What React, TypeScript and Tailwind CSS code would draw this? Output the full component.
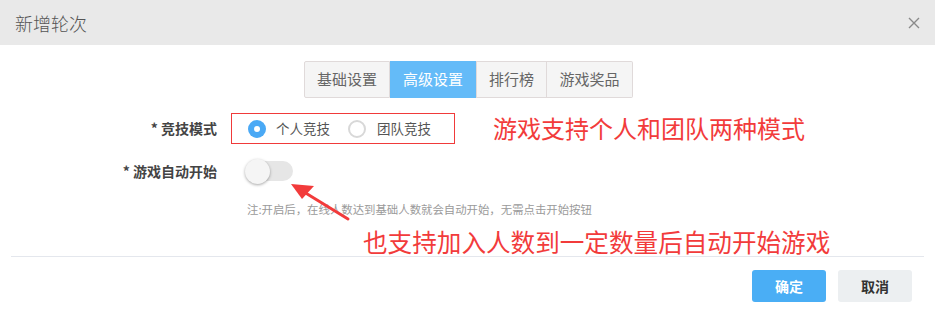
import React from "react";

export default function App() {
  return (
    <div
      className="relative w-[935px] h-[314px] bg-white overflow-hidden"
      style={{ fontFamily: '"Noto Sans CJK SC", "Noto Sans", sans-serif' }}
    >
      {/* Header */}
      <div className="h-[45px] bg-[#e9e9e9] flex items-center justify-between pl-[15px] pr-[14px]">
        <span className="text-[18px] text-[#555] font-light leading-none">新增轮次</span>
        <svg width="12" height="12" viewBox="0 0 12 12" className="mr-[1px]">
          <path d="M1 1L11 11M11 1L1 11" stroke="#8a8a8a" strokeWidth="1.4" />
        </svg>
      </div>

      {/* Tabs */}
      <div className="flex justify-center mt-[16px] pl-[2px]">
        <div className="flex h-[37px] text-[15px]">
          <div className="w-[86px] flex items-center justify-center bg-[#f5f5f5] border border-[#e0dada] text-[#666] rounded-l-[2px]">基础设置</div>
          <div className="w-[86px] flex items-center justify-center bg-[#64bbf8] text-white">高级设置</div>
          <div className="w-[71px] flex items-center justify-center bg-[#f5f5f5] border border-[#e0dada] text-[#666]">排行榜</div>
          <div className="w-[86px] flex items-center justify-center bg-[#f5f5f5] border border-l-0 border-[#e0dada] text-[#666] rounded-r-[2px]">游戏奖品</div>
        </div>
      </div>

      {/* Row 1 */}
      <div className="flex items-center mt-[15px] h-[31px]">
        <div className="w-[217px] text-right text-[14px] font-bold text-[#444]">* 竞技模式</div>
        <div className="ml-[14px] w-[224px] h-[31px] border border-[#f03a3a] flex items-center pl-[16px] text-[13.5px] text-[#555]">
          <span className="w-[18px] h-[18px] rounded-full bg-[#4aa9f5] flex items-center justify-center">
            <span className="w-[6px] h-[6px] rounded-full bg-white" />
          </span>
          <span className="ml-[10px]">个人竞技</span>
          <span className="ml-[18px] w-[18px] h-[18px] rounded-full border-2 border-[#d8d8d8] bg-white" />
          <span className="ml-[11px]">团队竞技</span>
        </div>
      </div>

      {/* Row 2 */}
      <div className="flex items-center mt-[14px] h-[26px]">
        <div className="w-[217px] text-right text-[14px] font-bold text-[#444]">* 游戏自动开始</div>
        <div className="ml-[28px] relative w-[48px] h-[26px] flex items-center">
          <div className="absolute left-[6px] right-0 h-[20px] rounded-full bg-[#e6e6e6]" />
          <div className="absolute left-0 w-[25px] h-[25px] rounded-full bg-[#f5f5f5] shadow-[0_1px_3px_rgba(0,0,0,0.35)]" />
        </div>
      </div>

      {/* Note */}
      <div className="ml-[247px] mt-[20px] text-[11.4px] text-[#9a9a9a] leading-none whitespace-nowrap">
        注:开启后，在线人数达到基础人数就会自动开始，无需点击开始按钮
      </div>

      {/* Divider */}
      <div className="mx-[11px] mt-[41px] h-[1px] bg-[#e4e7ed]" />

      {/* Buttons */}
      <div className="flex justify-end gap-[12px] pr-[23px] mt-[13px]">
        <button className="w-[74px] h-[32px] rounded-[3px] bg-[#4aaef5] text-white text-[14px] font-bold">确定</button>
        <button className="w-[74px] h-[32px] rounded-[3px] bg-[#eceff1] text-[#333] text-[14px] font-bold">取消</button>
      </div>

      {/* Annotations */}
      <div className="absolute left-[493px] top-[116px] text-[24px] text-[#f23b3b] leading-none whitespace-nowrap">
        游戏支持个人和团队两种模式
      </div>
      <div className="absolute left-[363px] top-[229px] text-[24.6px] text-[#f23b3b] leading-none whitespace-nowrap">
        也支持加入人数到一定数量后自动开始游戏
      </div>
      <svg className="absolute left-0 top-0" width="935" height="314" viewBox="0 0 935 314">
        <path d="M348 219 L304 192" stroke="#f23b3b" strokeWidth="3" strokeLinecap="round" />
        <path d="M291 184 L314 186 L302 199 Z" fill="#f23b3b" />
      </svg>
    </div>
  );
}
